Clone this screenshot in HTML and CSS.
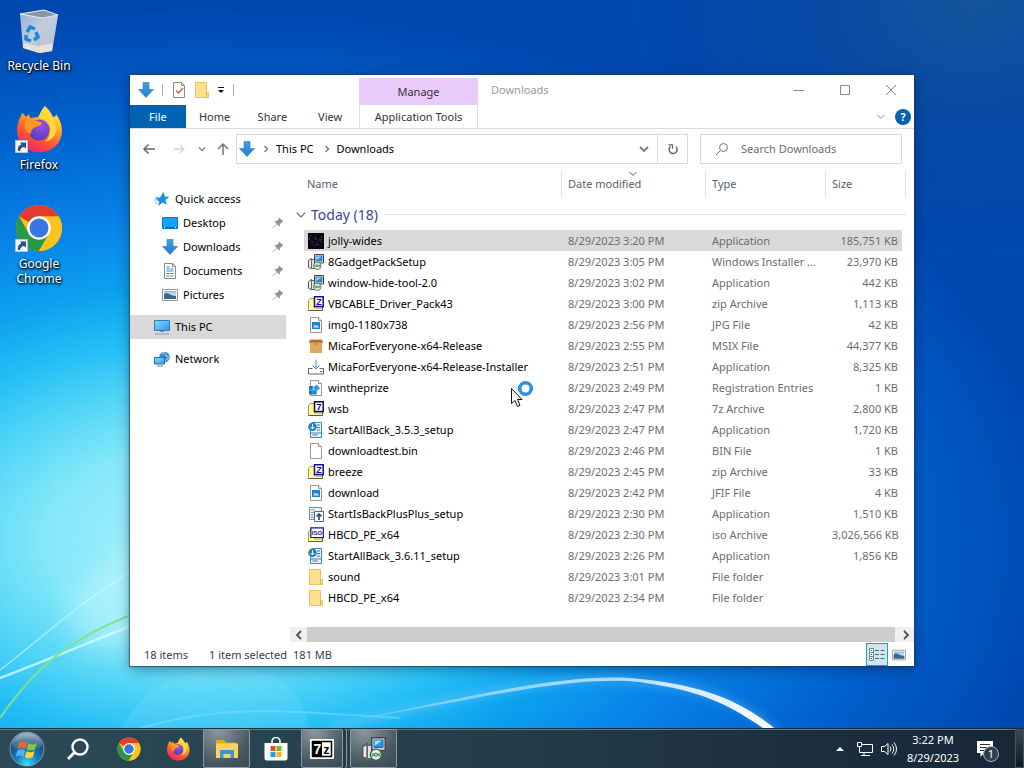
FILE: index.html
```html
<!DOCTYPE html>
<html lang="en">
<head>
<meta charset="utf-8">
<title>Downloads</title>
<link rel="stylesheet" href="styles.css">
</head>
<body>
<svg class="defs" aria-hidden="true">
  <defs>
    <linearGradient id="gArrow" x1="0" x2="0" y1="0" y2="1"><stop offset="0" stop-color="#3f9fe6"/><stop offset="1" stop-color="#1f7fd0"/></linearGradient>
    <linearGradient id="gScreen" x1="0" y1="0" x2="1" y2="1"><stop offset="0" stop-color="#8fd4fb"/><stop offset="1" stop-color="#2a9bea"/></linearGradient>
    <linearGradient id="gPic" x1="0" x2="0" y1="0" y2="1"><stop offset="0" stop-color="#7fbdf0"/><stop offset=".55" stop-color="#d5ebfa"/><stop offset=".6" stop-color="#466f88"/><stop offset="1" stop-color="#2d5a86"/></linearGradient>
    <linearGradient id="gFox" x1=".8" y1="0" x2=".3" y2="1"><stop offset="0" stop-color="#fff24a"/><stop offset=".35" stop-color="#ffb02a"/><stop offset=".65" stop-color="#ff5a30"/><stop offset="1" stop-color="#f01f6a"/></linearGradient>
    <radialGradient id="gFoxGlobe" cx=".6" cy=".3" r=".8"><stop offset="0" stop-color="#9a4ff0"/><stop offset="1" stop-color="#4a3cb0"/></radialGradient>
    <linearGradient id="gBin" x1="0" x2="1" y1="0" y2="1"><stop offset="0" stop-color="#a9bdd3"/><stop offset=".5" stop-color="#d5dde8"/><stop offset="1" stop-color="#9aa9bd"/></linearGradient>
    <radialGradient id="gOrb" cx=".5" cy=".95" r=".95"><stop offset="0" stop-color="#3fe0ff"/><stop offset=".35" stop-color="#1580c0"/><stop offset=".75" stop-color="#1b4a72"/><stop offset="1" stop-color="#5f8aa8"/></radialGradient>
    <linearGradient id="gGloss" x1="0" x2="0" y1="0" y2="1"><stop offset="0" stop-color="#fff" stop-opacity=".75"/><stop offset="1" stop-color="#fff" stop-opacity=".15"/></linearGradient>

    <symbol id="down" viewBox="0 0 16 16"><path d="M5 .5h6v7h4.500L8 15.500.5 7.500H5z" fill="url(#gArrow)" stroke="#2b7cc0" stroke-width=".6"/></symbol>
    <symbol id="folder" viewBox="0 0 16 16"><path d="M1.500.5h11v10h2v5h-13z" fill="#ffe08f" stroke="#e9c362"/><path d="M12.500 10.500v5" stroke="#e0b348"/></symbol>
    <symbol id="star" viewBox="0 0 16 16"><path d="M9.500.8l1.300 4.700 4.500.2-3.700 3 1 5-4.100-2.300L4.300 15l.8-4.600L1.600 7.500l4.500-.9z" fill="#1f8fe0"/><path d="M1 6.500h4M0 9h4M1 12h3" stroke="#74bdf0"/></symbol>
    <symbol id="desktop" viewBox="0 0 16 16"><path d="M.5 2.500h15v11H.5z" fill="#18a0fb" stroke="#0a78c8"/><path d="M1 12.500h14" stroke="#0763a8"/><path d="M2 12.500h1M13 12.500h1" stroke="#fff"/></symbol>
    <symbol id="docs" viewBox="0 0 16 16"><path d="M2.500.5h8l3 3v12h-11z" fill="#fff" stroke="#8a8a8a"/><path d="M10.500.5v3h3" fill="none" stroke="#8a8a8a"/><path d="M4.500 4h3M4.500 6h3M4.500 8h7M4.500 10.500h3M4.500 13h3M8.500 10.500h3M8.500 13h3M8.500 6h3" stroke="#2a8fd0"/></symbol>
    <symbol id="pics" viewBox="0 0 16 16"><path d="M.5 2.500h15v11H.5z" fill="#fff" stroke="#8f9aa3"/><path d="M2 4h12v8H2z" fill="url(#gPic)"/><path d="M2 7l3-1 9 4v2H2z" fill="#3a6a88"/></symbol>
    <symbol id="pc" viewBox="0 0 16 16"><path d="M.5 1.500h15v10H.5z" fill="url(#gScreen)" stroke="#2c7fb8"/><path d="M6 12.500h4" stroke="#78909c"/><path d="M1 15h14" stroke="#8599a5"/></symbol>
    <symbol id="net" viewBox="0 0 16 16"><circle cx="10.500" cy="6" r="5.300" fill="#3c8cc8"/><path d="M8 3c2-2 4-1 4 1s2 2 3 1M11 10c1-2 3-2 4-3" stroke="#a9d8f2" fill="none"/><path d="M.5 6.500h10v6.500H.5z" fill="url(#gScreen)" stroke="#1f70ac"/><path d="M3 15h6" stroke="#4b8dbb"/></symbol>
    <symbol id="pin" viewBox="0 0 12 12"><path d="M7.500.8l3.700 3.700-1.300.7-2 2-.2 2.500L5.200 7.300 1 11.200l-.3-.3L4.700 6.800 2.300 4.300l2.500-.2 2-2z" fill="#8a949c"/></symbol>
    <symbol id="chev" viewBox="0 0 10 10"><path d="M1.500 3L5 6.500 8.500 3" fill="none" stroke="currentColor"/></symbol>
    <symbol id="chevBold" viewBox="0 0 10 10"><path d="M1 3l4 4 4-4" fill="none" stroke="currentColor" stroke-width="1.800"/></symbol>
    <symbol id="chevR" viewBox="0 0 10 10"><path d="M3.500 2L6.500 5l-3 3" fill="none" stroke="currentColor" stroke-width="1.400"/></symbol>

    <symbol id="jolly" viewBox="0 0 16 16"><path d="M0 0h16v16H0z" fill="#0b0710"/><path d="M2 3h2M6 5h2v2M11 6l3 1M3 9h3M8 11l2-1" stroke="#5a3458"/><path d="M9 8h4v2M4 12h8" stroke="#3a1c44"/><path d="M1 6h1M13 4h1" stroke="#c57a5a"/></symbol>
    <symbol id="setup" viewBox="0 0 16 16"><path d="M.5 6.500l3-2v10l-3-1z" fill="#eee" stroke="#555"/><path d="M3.500 5.500h3v9h-3z" fill="#e6dede" stroke="#666"/><path d="M6.500.5h9v8.500h-9z" fill="#d5dade" stroke="#444"/><path d="M8 2h6v5H8z" fill="#1f98ea" stroke="#1f5a9a" stroke-width=".6"/><path d="M8.400 2.400h5L8.400 6z" fill="#9fe0ff"/><circle cx="9.300" cy="11.800" r="3.700" fill="#e3efe6" stroke="#4c5a54" stroke-width=".8"/><path d="M9.300 11.800l-3-1.500v3.200zM9.300 11.800l3-1.500v3.200z" fill="#3fc070"/><circle cx="9.300" cy="11.800" r="1" fill="#fff" stroke="#333" stroke-width=".6"/></symbol>
    <symbol id="arch" viewBox="0 0 16 16"><path d="M.5 4.500l2-2h4v9.500h8v2.500H.5z" fill="#ffff9c" stroke="#a49a4a"/><path d="M.5 14.500h14" stroke="#555"/><path d="M14.500 14V11" stroke="#555"/></symbol>
    <symbol id="zip" viewBox="0 0 16 16"><use href="#arch"/><path d="M6.500.8h8.700v9.700H6.500z" fill="#fff" stroke="#1410a0" stroke-width="1.500"/><text x="10.900" y="9" text-anchor="middle" font-size="9" font-weight="700" font-family="Liberation Sans, sans-serif" fill="#1410a0">Z</text></symbol>
    <symbol id="seven" viewBox="0 0 16 16"><use href="#arch"/><path d="M6.500.8h8.700v9.700H6.500z" fill="#fff" stroke="#0a084a" stroke-width="1.500"/><text x="10.900" y="9" text-anchor="middle" font-size="9" font-weight="700" font-family="Liberation Sans, sans-serif" fill="#0a084a">7</text></symbol>
    <symbol id="iso" viewBox="0 0 16 16"><use href="#arch"/><path d="M2.800.8h12.500v9.700H2.800z" fill="#fff" stroke="#1410a0" stroke-width="1.200"/><text x="9" y="8" text-anchor="middle" font-size="6" font-weight="700" font-family="Liberation Sans, sans-serif" fill="#1410a0">ISO</text></symbol>
    <symbol id="blank" viewBox="0 0 16 16"><path d="M2.500.5h8l3 3v12h-11z" fill="#fff" stroke="#999"/><path d="M10.500.5v3h3" fill="#eee" stroke="#999"/></symbol>
    <symbol id="img" viewBox="0 0 16 16"><use href="#blank"/><path d="M4 5h8v7H4z" fill="#1683d8"/><path d="M5 10.500l2-3 1.500 1.500 1-1 1.500 2.500z" fill="#bfe3fa"/></symbol>
    <symbol id="box" viewBox="0 0 16 16"><path d="M2 3h12v12H2z" fill="#dda860"/><path d="M2 1.500h12L15.500 5H.5z" fill="#c48a48"/><path d="M2.500 2h11v2h-11z" fill="#a87138"/><path d="M6 6h4" stroke="#c08840"/></symbol>
    <symbol id="inst" viewBox="0 0 16 16"><path d="M4.500 9.500h-4v5.500h15V9.500h-4" fill="none" stroke="#5b6570"/><path d="M8 .5v9.500M4.500 6.500L8 10l3.500-3.500" fill="none" stroke="#2a98c0"/><path d="M12 12.500h2" stroke="#5b6570"/></symbol>
    <symbol id="reg" viewBox="0 0 16 16"><use href="#blank"/><path d="M1 6h4v4h3.500v4.500H1z" fill="#1577c0"/><path d="M8.500 4.500L12 8l-3.500 3.500L5 8z" fill="#2f9ae0"/><path d="M1 10h7.500M5 6.500v8" stroke="#7cc8f4" stroke-width=".7"/></symbol>
    <symbol id="sab" viewBox="0 0 16 16"><path d="M4.500.5h9v15h-11V5z" fill="#e4f2fb" stroke="#3d87bd"/><path d="M9 3h3M9 5.500h3M9 8h3M4.500 13h5" stroke="#50708a"/><path d="M3 11h10" stroke="#3d87bd"/><circle cx="4.500" cy="4.800" r="4.300" fill="#1a84c4"/><path d="M4.500 2v5M2.500 5l2 2 2-2" fill="none" stroke="#fff"/></symbol>
    <symbol id="sib" viewBox="0 0 16 16"><path d="M1.500 1.500h12v12h-12z" fill="#eef2f5" stroke="#7a8894"/><path d="M3 4h4M3 6.500h3M3 9h3M3 11.500h3" stroke="#8b98a4"/><path d="M6.500 5.500h9v10h-9z" fill="#fff" stroke="#5c6b7a"/><path d="M11 14V8.500M8.500 10.500L11 8l2.500 2.500" fill="none" stroke="#1f4f94" stroke-width="1.700"/></symbol>

    <symbol id="chrome" viewBox="0 0 48 48"><circle cx="24" cy="24" r="23" fill="#fbc116"/><path d="M24 24L4.100 12.500A23 23 0 0 1 43.900 12.500H24z" fill="#e33b2e"/><path d="M4.100 12.500A23 23 0 0 0 24 47l10-17.300L24 24 14 29.700z" fill="#279847"/><path d="M24 12.500h19.900A23 23 0 0 1 24 47l10-17.300z" fill="#fcc31a"/><circle cx="24" cy="24" r="11.800" fill="#fff"/><circle cx="24" cy="24" r="9.500" fill="#3a76e0"/></symbol>
    <symbol id="firefox" viewBox="0 0 48 48"><path d="M30 1c3 3 6 6 8 11 2 0 3-1 3-3 4 5 6 11 6 17a22 21 0 0 1-45 0C2 20 3 16 5 13l2-5c2 1 3 2 4 4l3-3 1 4c3 0 6-1 8-1z" fill="url(#gFox)"/><circle cx="24" cy="25" r="10.500" fill="url(#gFoxGlobe)"/><path d="M11 14c5-2 9 2 16 3-1 3-3 4-6 5-3 1-5 3-5 7-6-2-8-9-5-15z" fill="#ff9526"/><path d="M30 1c-4 4-6 9-6 12 5 0 10 3 11 9 1 6-1 11-5 15 8-2 13-9 11-17-1-7-9-12-11-19z" fill="#ffd93a"/></symbol>
    <symbol id="shortcut" viewBox="0 0 13 13"><path d="M.5.5h12v12H.5z" fill="#f4f6f8" stroke="#b9c4cf"/><path d="M3 11c-.5-4 1-6 3.500-6.500L5 2.500h6v6L9 7C6 7.500 5.500 9 5 11z" fill="#25528f"/></symbol>
    <symbol id="flag" viewBox="0 0 24 24"><path d="M4 5.500c3-1.800 5-1.500 7.500 0L10 11.500C7.500 10 5.500 10 2.500 11.500z" fill="#f0642a"/><path d="M12.800 6c3 1.500 5 1.500 8 0l-1.700 6c-3 1.500-5 1.300-7.800-.1z" fill="#8cc63c"/><path d="M2.200 13c3-1.600 5-1.500 7.500 0L8.100 19c-2.500-1.500-4.500-1.500-7.500 0z" fill="#4fb4f0"/><path d="M11 13.400c2.800 1.500 4.800 1.500 7.800 0l-1.700 6c-3 1.500-5 1.500-7.700-.1z" fill="#ffd23f"/></symbol>
  </defs>
</svg>

<div class="screen">
  <svg class="wallpaper" viewBox="0 0 1024 768" preserveAspectRatio="xMidYMid slice" aria-hidden="true">
    <defs>
      <radialGradient id="sky" gradientUnits="userSpaceOnUse" cx="0" cy="0" r="1" gradientTransform="translate(200 540) scale(860 530)">
        <stop offset="0" stop-color="#a8f0fc"/><stop offset=".18" stop-color="#84e8f9"/><stop offset=".29" stop-color="#4fd4f7"/><stop offset=".38" stop-color="#24bef6"/><stop offset=".48" stop-color="#0ca0ee"/><stop offset=".6" stop-color="#0884ea"/><stop offset=".8" stop-color="#0060cc"/><stop offset="1" stop-color="#0048b0"/>
      </radialGradient>
      <radialGradient id="corner" cx=".95" cy="0" r=".35"><stop offset="0" stop-color="#1c5a94" stop-opacity=".7"/><stop offset="1" stop-color="#0a3f90" stop-opacity="0"/></radialGradient>
      <linearGradient id="arcFade" x1="0" x2="1"><stop offset="0" stop-color="#fff" stop-opacity=".1"/><stop offset=".5" stop-color="#cfefff" stop-opacity=".7"/><stop offset="1" stop-color="#fff"/></linearGradient>
      <filter id="soft" x="-20%" y="-20%" width="140%" height="140%"><feGaussianBlur stdDeviation="4"/></filter>
      <filter id="haze" x="-50%" y="-50%" width="200%" height="200%"><feGaussianBlur stdDeviation="14"/></filter>
    </defs>
    <rect width="1024" height="768" fill="url(#sky)"/>
    <rect width="1024" height="768" fill="url(#corner)"/>
    <path d="M70 600c20-30 50-50 80-60v110H80z" fill="#d8fbff" opacity=".4" filter="url(#haze)"/>
    <path d="M120 735c20-60 90-78 150-60 30 12 40 40 40 70z" fill="#9fe6ff" opacity=".15"/>
    <path d="M0 678C60 655 95 640 150 618" fill="none" stroke="#d5fbff" stroke-width="2.500" opacity=".8"/>
    <path d="M0 670C40 640 80 600 150 560" fill="none" stroke="#c8f8ff" stroke-width="1.500" opacity=".7"/>
    <path d="M0 718C40 660 80 632 150 608" fill="none" stroke="#7fe38a" stroke-width="2"/>
    <path d="M120 735C220 700 290 712 400 718" fill="none" stroke="#8fe6ff" stroke-width="2" opacity=".4"/>
    <path d="M330 728C440 700 560 672 640 681c60 6 100 20 136 50" fill="none" stroke="#9fdcff" stroke-width="9" opacity=".25" filter="url(#soft)"/>
    <path d="M330 724C440 705 560 670 640 679c60 6 100 20 138 52l-11 0C720 697 690 690 640 682c-80-8-200 27-310 41z" fill="url(#arcFade)"/>
  </svg>

  <main class="desktop">
    <nav class="shortcuts" aria-label="Desktop">
      <button class="shortcut">
        <svg class="big" viewBox="0 0 48 48" aria-hidden="true"><path d="M5 8L29 4l14 5-6 36-13 2-16-5z" fill="url(#gBin)" opacity=".9"/><path d="M5 8l22 4 16-3-14-5z" fill="#8896a8" stroke="#e6eef6"/><path d="M27 12l-2 35 12-2 6-36z" fill="#c4ccd8" opacity=".7"/><path d="M8 37l16 3 14-3-1 8-13 2-16-5z" fill="#f5ead8" opacity=".75"/><path d="M12 26l3-5 5 2M21 26l2 5-4 3M16 35l-5-2v-4" fill="none" stroke="#2086d8" stroke-width="3.500"/></svg>
        <span>Recycle Bin</span>
      </button>
      <button class="shortcut">
        <span class="art"><svg class="big" aria-hidden="true"><use href="#firefox"/></svg><svg class="badge" aria-hidden="true"><use href="#shortcut"/></svg></span>
        <span>Firefox</span>
      </button>
      <button class="shortcut">
        <span class="art"><svg class="big" aria-hidden="true"><use href="#chrome"/></svg><svg class="badge" aria-hidden="true"><use href="#shortcut"/></svg></span>
        <span>Google<br>Chrome</span>
      </button>
    </nav>

    <section class="window" aria-label="Downloads">
      <header class="ribbon">
        <div class="quick">
          <svg class="i16" aria-hidden="true"><use href="#down"/></svg>
          <i class="bar"></i>
          <button aria-label="Properties"><svg class="i16" viewBox="0 0 16 16"><path d="M2.500.5h8l3 3v12h-11z" fill="#fff" stroke="#8a8a8a"/><path d="M10.500.5v3h3" fill="none" stroke="#8a8a8a"/><path d="M5 8.500l2.500 2.500L12 6" fill="none" stroke="#d8604a" stroke-width="1.500"/></svg></button>
          <button aria-label="New folder"><svg class="i16"><use href="#folder"/></svg></button>
          <button aria-label="Customize"><svg class="i8" viewBox="0 0 8 8"><path d="M1 1.500h6" stroke="#111"/><path d="M1 4h6L4 7z" fill="#111"/></svg></button>
          <i class="bar"></i>
        </div>
        <div class="manage">Manage</div>
        <div class="caption">
          <h1>Downloads</h1>
          <button aria-label="Minimize"><svg class="i12" viewBox="0 0 12 12"><path d="M.5 6.500h11" stroke="#888"/></svg></button>
          <button aria-label="Maximize"><svg class="i12" viewBox="0 0 12 12"><path d="M1.500 1.500h9v9h-9z" fill="none" stroke="#888"/></svg></button>
          <button aria-label="Close"><svg class="i12" viewBox="0 0 12 12"><path d="M1 1l10 10M11 1L1 11" stroke="#888"/></svg></button>
        </div>
        <div class="tabs">
          <button class="file">File</button><button>Home</button><button>Share</button><button>View</button>
        </div>
        <button class="tools">Application Tools</button>
        <div class="help">
          <button aria-label="Expand the ribbon"><svg class="i10"><use href="#chev"/></svg></button>
          <button class="question" aria-label="Help">?</button>
        </div>
      </header>

      <div class="location">
        <div class="arrows">
          <button aria-label="Back"><svg class="i14" viewBox="0 0 14 14"><path d="M13 7H2M6.500 2.500L2 7l4.500 4.500" fill="none" stroke="#666" stroke-width="1.500"/></svg></button>
          <button aria-label="Forward"><svg class="i14" viewBox="0 0 14 14"><path d="M2 7h10M8 3l4 4-4 4" fill="none" stroke="#d4d4d4" stroke-width="1.300"/></svg></button>
          <button aria-label="Recent locations"><svg class="i8"><use href="#chevBold"/></svg></button>
          <button aria-label="Up"><svg class="i14" viewBox="0 0 14 14"><path d="M7 13V2M2 7l5-5 5 5" fill="none" stroke="#777" stroke-width="1.500"/></svg></button>
        </div>
        <div class="address">
          <svg class="i16" aria-hidden="true"><use href="#down"/></svg>
          <svg class="i10" aria-hidden="true"><use href="#chevR"/></svg>
          <a href="#">This PC</a>
          <svg class="i10" aria-hidden="true"><use href="#chevR"/></svg>
          <a href="#">Downloads</a>
          <button class="drop" aria-label="Previous locations"><svg class="i10"><use href="#chevBold"/></svg></button>
          <button class="reload" aria-label="Refresh"><svg class="i12" viewBox="0 0 12 12"><path d="M3.500 3.500A4 4 0 1 0 9 3.800" fill="none" stroke="#666" stroke-width="1.500"/><path d="M1.500 1.800h4v4" fill="none" stroke="#666" stroke-width="1.300"/></svg></button>
        </div>
        <label class="search">
          <svg class="i14" viewBox="0 0 14 14" aria-hidden="true"><circle cx="8.500" cy="5.500" r="4" fill="none" stroke="#777"/><path d="M5.500 8.500L1 13" stroke="#777"/></svg>
          <input type="text" placeholder="Search Downloads" aria-label="Search Downloads">
        </label>
      </div>

      <div class="panes">
        <nav class="tree" aria-label="Folders">
          <a class="root" href="#"><svg class="i16"><use href="#star"/></svg>Quick access</a>
          <a href="#"><svg class="i16"><use href="#desktop"/></svg>Desktop<svg class="pin"><use href="#pin"/></svg></a>
          <a href="#"><svg class="i16"><use href="#down"/></svg>Downloads<svg class="pin"><use href="#pin"/></svg></a>
          <a href="#"><svg class="i16"><use href="#docs"/></svg>Documents<svg class="pin"><use href="#pin"/></svg></a>
          <a href="#"><svg class="i16"><use href="#pics"/></svg>Pictures<svg class="pin"><use href="#pin"/></svg></a>
          <a class="root top current" href="#"><svg class="i16"><use href="#pc"/></svg>This PC</a>
          <a class="root top" href="#"><svg class="i16"><use href="#net"/></svg>Network</a>
        </nav>

        <div class="details">
          <div class="list">
            <table>
              <colgroup><col class="c-edge"><col><col class="c-date"><col class="c-type"><col class="c-size"><col class="c-end"></colgroup>
              <thead>
                <tr><td></td><th class="name"><span>Name</span></th><th><span>Date modified</span><svg class="sort"><use href="#chev"/></svg></th><th><span>Type</span></th><th><span>Size</span></th><td></td></tr>
              </thead>
              <tbody>
                <tr class="group"><td colspan="6"><button><svg class="i12"><use href="#chev"/></svg>Today (18)</button></td></tr>
                <tr class="picked"><td></td><td><svg class="i16"><use href="#jolly"/></svg>jolly-wides</td><td>8/29/2023 3:20 PM</td><td>Application</td><td>185,751 KB</td><td></td></tr>
                <tr><td></td><td><svg class="i16"><use href="#setup"/></svg>8GadgetPackSetup</td><td>8/29/2023 3:05 PM</td><td>Windows Installer ...</td><td>23,970 KB</td><td></td></tr>
                <tr><td></td><td><svg class="i16"><use href="#setup"/></svg>window-hide-tool-2.0</td><td>8/29/2023 3:02 PM</td><td>Application</td><td>442 KB</td><td></td></tr>
                <tr><td></td><td><svg class="i16"><use href="#zip"/></svg>VBCABLE_Driver_Pack43</td><td>8/29/2023 3:00 PM</td><td>zip Archive</td><td>1,113 KB</td><td></td></tr>
                <tr><td></td><td><svg class="i16"><use href="#img"/></svg>img0-1180x738</td><td>8/29/2023 2:56 PM</td><td>JPG File</td><td>42 KB</td><td></td></tr>
                <tr><td></td><td><svg class="i16"><use href="#box"/></svg>MicaForEveryone-x64-Release</td><td>8/29/2023 2:55 PM</td><td>MSIX File</td><td>44,377 KB</td><td></td></tr>
                <tr><td></td><td><svg class="i16"><use href="#inst"/></svg>MicaForEveryone-x64-Release-Installer</td><td>8/29/2023 2:51 PM</td><td>Application</td><td>8,325 KB</td><td></td></tr>
                <tr><td></td><td><svg class="i16"><use href="#reg"/></svg>wintheprize</td><td>8/29/2023 2:49 PM</td><td>Registration Entries</td><td>1 KB</td><td></td></tr>
                <tr><td></td><td><svg class="i16"><use href="#seven"/></svg>wsb</td><td>8/29/2023 2:47 PM</td><td>7z Archive</td><td>2,800 KB</td><td></td></tr>
                <tr><td></td><td><svg class="i16"><use href="#sab"/></svg>StartAllBack_3.5.3_setup</td><td>8/29/2023 2:47 PM</td><td>Application</td><td>1,720 KB</td><td></td></tr>
                <tr><td></td><td><svg class="i16"><use href="#blank"/></svg>downloadtest.bin</td><td>8/29/2023 2:46 PM</td><td>BIN File</td><td>1 KB</td><td></td></tr>
                <tr><td></td><td><svg class="i16"><use href="#zip"/></svg>breeze</td><td>8/29/2023 2:45 PM</td><td>zip Archive</td><td>33 KB</td><td></td></tr>
                <tr><td></td><td><svg class="i16"><use href="#img"/></svg>download</td><td>8/29/2023 2:42 PM</td><td>JFIF File</td><td>4 KB</td><td></td></tr>
                <tr><td></td><td><svg class="i16"><use href="#sib"/></svg>StartIsBackPlusPlus_setup</td><td>8/29/2023 2:30 PM</td><td>Application</td><td>1,510 KB</td><td></td></tr>
                <tr><td></td><td><svg class="i16"><use href="#iso"/></svg>HBCD_PE_x64</td><td>8/29/2023 2:30 PM</td><td>iso Archive</td><td>3,026,566 KB</td><td></td></tr>
                <tr><td></td><td><svg class="i16"><use href="#sab"/></svg>StartAllBack_3.6.11_setup</td><td>8/29/2023 2:26 PM</td><td>Application</td><td>1,856 KB</td><td></td></tr>
                <tr><td></td><td><svg class="i16"><use href="#folder"/></svg>sound</td><td>8/29/2023 3:01 PM</td><td>File folder</td><td></td><td></td></tr>
                <tr><td></td><td><svg class="i16"><use href="#folder"/></svg>HBCD_PE_x64</td><td>8/29/2023 2:34 PM</td><td>File folder</td><td></td><td></td></tr>
              </tbody>
            </table>
          </div>
          <div class="scroll">
            <button aria-label="Scroll left"><svg class="i10 left"><use href="#chevBold"/></svg></button>
            <div class="thumb"></div>
            <button aria-label="Scroll right"><svg class="i10 right"><use href="#chevBold"/></svg></button>
          </div>
        </div>
      </div>

      <footer class="status">
        <span class="count">18 items</span><span>1 item selected</span><span>181 MB</span>
        <div class="views">
          <button class="on" aria-label="Details view"><svg class="i18" viewBox="0 0 18 18"><path d="M1.500 2.500h4v4h-4zM1.500 6.500h4v4h-4zM1.500 10.500h4v4h-4z" fill="#fff" stroke="#6d8b95"/><path d="M3 4.500h1M3 8.500h1M3 12.500h1" stroke="#333"/><path d="M7 4.500h4M7 8.500h4M7 12.500h4M12.500 4.500h4M12.500 8.500h4M12.500 12.500h4" stroke="#55666e"/></svg></button>
          <button aria-label="Thumbnail view"><svg class="i14" viewBox="0 1 16 14"><use href="#pics" width="16" height="16"/></svg></button>
        </div>
      </footer>
    </section>

    <svg class="pointer" viewBox="0 0 24 28" aria-hidden="true"><circle cx="15.500" cy="8.500" r="5.800" fill="#fff" stroke="#2f8fe0" stroke-width="3.600"/><path d="M1.500 8.500v15l3.500-3 2.500 6 2.500-1-2.500-6h4.500z" fill="#fff" stroke="#111"/></svg>
  </main>

  <footer class="taskbar">
    <button class="start" aria-label="Start"><svg class="orb" viewBox="0 0 36 36"><circle cx="18" cy="18" r="17" fill="url(#gOrb)" stroke="#8fb0c4" stroke-width=".8"/><path d="M2.500 15C4 6 11 2 18 2s14 4 15.500 13C25 20 11 20 2.500 15z" fill="url(#gGloss)" opacity=".6"/><use href="#flag" x="6" y="6" width="25" height="25"/></svg></button>
    <button class="task" aria-label="Search"><svg class="i24" viewBox="0 0 24 24"><circle cx="14" cy="10" r="7.500" fill="none" stroke="#fff" stroke-width="2.400"/><path d="M8.500 15.500L2 22" stroke="#fff" stroke-width="2.800"/></svg></button>
    <button class="task" aria-label="Google Chrome"><svg class="i24"><use href="#chrome"/></svg></button>
    <button class="task" aria-label="Firefox"><svg class="i24"><use href="#firefox"/></svg></button>
    <button class="task open" aria-label="File Explorer"><svg class="i24" viewBox="0 0 24 24"><path d="M1 3h8l2 2.500h10v3H1z" fill="#e8a820"/><path d="M1 6.500h22V21H1z" fill="#ffd35c"/><path d="M5 13h14v8h-3.500v-4h-7v4H5z" fill="#3a96dc"/></svg></button>
    <button class="task store" aria-label="Microsoft Store"><svg class="i24" viewBox="0 0 24 24"><path d="M8 6V4.500a4 4 0 0 1 8 0V6" fill="none" stroke="#e8eef2" stroke-width="1.700"/><path d="M.5 6h23v15.500a2 2 0 0 1-2 2h-19a2 2 0 0 1-2-2z" fill="#fff"/><path d="M6.500 9h5v5h-5z" fill="#e8502a"/><path d="M12.500 9h5v5h-5z" fill="#7cb82a"/><path d="M6.500 15h5v5h-5z" fill="#1f9fe8"/><path d="M12.500 15h5v5h-5z" fill="#f8b814"/></svg></button>
    <button class="task open stack" aria-label="7-Zip"><svg class="i24" viewBox="0 0 24 24"><path d="M.5 2.500h23v19H.5z" fill="#fff" stroke="#fff"/><path d="M2.500 4.500h19v15h-19z" fill="#fff" stroke="#000" stroke-width="1.500"/><path d="M3 5h9v14H3z" fill="#000"/><text x="7.500" y="17" text-anchor="middle" font-family="Liberation Sans, sans-serif" font-size="14" font-weight="700" fill="#fff">7</text><text x="16.500" y="17" text-anchor="middle" font-family="Liberation Sans, sans-serif" font-size="12" font-weight="700">z</text></svg></button>
    <button class="task open" aria-label="Setup"><svg class="i24"><use href="#setup"/></svg></button>
    <div class="tray">
      <button aria-label="Show hidden icons"><svg class="i8" viewBox="0 0 8 8"><path d="M0 6l4-4 4 4z" fill="#fff"/></svg></button>
      <button aria-label="Network"><svg class="i18" viewBox="0 0 18 18"><path d="M6 4.500h10.500v8H3.500V7.500M8 12.500v3M5 15.500h9" fill="none" stroke="#fff"/><path d="M1.500 2.500h4v4h-4zM3.500 6.500v3" fill="none" stroke="#fff"/></svg></button>
      <button aria-label="Volume"><svg class="i18" viewBox="0 0 18 18"><path d="M1.500 6.500h3l3.500-3v11l-3.500-3h-3z" fill="none" stroke="#fff"/><path d="M10 6.500q2 2.500 0 5M12 4.500q3.500 4.500 0 9M14 2.500q5 6.500 0 13" fill="none" stroke="#fff"/></svg></button>
      <button class="clock"><span>3:22 PM</span><span>8/29/2023</span></button>
      <button class="notes" aria-label="1 new notification"><svg class="i18" viewBox="0 0 18 18"><path d="M1 1h16v12H8l-3.500 4v-4H1z" fill="#fff"/><path d="M4 4.500h10M4 7.500h10M4 10.500h6" stroke="#24323c"/></svg><span>1</span></button>
      <button class="peek" aria-label="Show desktop"></button>
    </div>
  </footer>
</div>
</body>
</html>
```
FILE: styles.css
```css
* { box-sizing: border-box; }

body {
  margin: 0;
  font: 11px/16px "Noto Sans", "Open Sans", sans-serif;
  color: #000;
}

button {
  display: flex;
  align-items: center;
  justify-content: center;
  padding: 0;
  border: 0;
  background: none;
  font: inherit;
  color: inherit;
}

a { color: inherit; text-decoration: none; }

.defs { position: absolute; width: 0; height: 0; }

svg { flex: none; display: block; }
.i8 { width: 8px; height: 8px; }
.i10 { width: 10px; height: 10px; }
.i12 { width: 12px; height: 12px; }
.i14 { width: 14px; height: 14px; }
.i16 { width: 16px; height: 16px; }
.i18 { width: 18px; height: 18px; }
.i24 { width: 24px; height: 24px; }

.screen {
  position: relative;
  display: flex;
  flex-direction: column;
  height: 100vh;
  overflow: hidden;
}

.wallpaper { position: absolute; inset: 0; width: 100%; height: 100%; }

.desktop { position: relative; flex: 1; min-height: 0; }

/* Desktop shortcuts */
.shortcuts {
  display: flex;
  flex-direction: column;
  gap: 25px;
  width: 78px;
  padding-top: 6px;
}

.shortcut {
  flex-direction: column;
  gap: 4px;
  min-height: 74px;
  justify-content: flex-start;
  font-size: 12px;
  line-height: 15px;
  color: #fff;
  text-shadow: 1px 1px 2px #000, 0 1px 3px #000;
}

.big { width: 48px; height: 48px; }
.art { position: relative; }
.badge { position: absolute; left: 0; bottom: 0; width: 13px; height: 13px; }

/* Explorer window */
.window {
  position: absolute;
  inset: 75px 110px 62px 130px;
  display: flex;
  flex-direction: column;
  background: #fff;
  box-shadow: 0 0 1px 1px rgba(30, 60, 90, .6), 0 3px 12px rgba(0, 20, 60, .45);
}

.ribbon {
  display: grid;
  grid-template: 30px 23px / 229px 119px 1fr;
  border-bottom: 1px solid #dadbdc;
  color: #333;
}

.quick { display: flex; align-items: center; gap: 7px; padding-left: 8px; }
.bar { width: 1px; height: 12px; margin: 0 1px; background: #aaa; }

.manage {
  margin-top: 3px;
  display: grid;
  place-items: center;
  background: #e9ccfb;
}

.caption { display: flex; align-items: center; }
.caption h1 { flex: 1; margin: 0; padding-left: 13px; font-size: 11px; font-weight: 400; color: #999; }
.caption button { width: 46px; height: 28px; }

.tabs { display: flex; }
.tabs button { width: 58px; }
.tabs .file { width: 56px; background: #0063b1; color: #fff; }

.tools { border: solid #e0e0e0; border-width: 0 1px; }

.help { display: flex; align-items: center; justify-content: flex-end; gap: 9px; padding-right: 3px; color: #888; }
.question { width: 16px; height: 16px; border-radius: 50%; background: #0063b1; color: #fff; font-weight: 700; }

.location { display: flex; align-items: center; height: 40px; padding-right: 12px; }

.arrows { display: flex; align-items: center; gap: 14px; width: 106px; padding-left: 12px; color: #888; }
.arrows button { width: 14px; }
.arrows button:nth-child(2) { margin-left: 2px; }
.arrows button:nth-child(3) { width: 8px; margin-left: -2px; }
.arrows button:nth-child(4) { margin-left: -4px; }

.address {
  display: flex;
  align-items: center;
  flex: 1;
  gap: 6px;
  height: 30px;
  margin-right: 12px;
  padding-left: 2px;
  border: 1px solid #d9d9d9;
  color: #777;
}
.address > .i10 { margin-right: -1px; }
.address a { margin-right: 2px; color: #000; }
.drop { margin-left: auto; width: 14px; }
.reload { align-self: stretch; width: 30px; border-left: 1px solid #d9d9d9; }

.search {
  display: flex;
  align-items: center;
  gap: 12px;
  width: 202px;
  height: 30px;
  padding-left: 14px;
  border: 1px solid #d9d9d9;
}
.search input { flex: 1; min-width: 0; padding: 0; border: 0; outline: 0; font: inherit; }
.search input::placeholder { color: #6d6d6d; opacity: 1; }

.panes { display: flex; flex: 1; min-height: 0; }

/* Navigation tree */
.tree { width: 160px; padding: 18px 4px 0 0; }
.tree a { display: flex; align-items: center; gap: 5px; height: 24px; padding: 0 2px 0 32px; }
.tree .root { padding-left: 24px; }
.tree .top { margin-top: 8px; }
.tree .current { background: #d9d9d9; }
.pin { width: 12px; height: 12px; margin-left: auto; }

/* File list */
.details { display: flex; flex-direction: column; flex: 1; min-width: 0; }
.list { flex: 1; min-height: 0; padding: 0 8px 0 4px; overflow: hidden; }

table { width: 100%; table-layout: fixed; border-spacing: 0; }
.c-edge { width: 10px; }
.c-date { width: 144px; }
.c-type { width: 120px; }
.c-size { width: 76px; }
.c-end { width: 4px; }

th, td { height: 21px; padding: 0 0 0 6px; text-align: left; font-weight: 400; white-space: nowrap; color: #6d6d6d; }
td:first-child, td:last-child { padding: 0; }
thead th, thead td { position: relative; height: 30px; color: #555f70; }
thead th span { display: block; padding: 5px 0 5px 6px; margin-left: -7px; border-left: 1px solid #e2e2e2; }
thead .name { padding-left: 3px; }
thead .name span { margin: 0; padding-left: 0; border: 0; }
thead td:last-child { background: linear-gradient(#e2e2e2, #e2e2e2) right / 1px 26px no-repeat; }
.sort { position: absolute; left: 66px; top: 0; width: 10px; height: 10px; }

.group td { height: 31px; }
.group button { width: 100%; gap: 4px; font-size: 14px; color: #3a4696; }
.group button::after { content: ""; flex: 1; height: 1px; margin-left: 2px; background: #e5e5e5; }
.group svg { color: #666; margin-left: 1px; }

tbody td:nth-child(2) { padding-left: 4px; color: #000; }
tbody td .i16 { display: inline-block; vertical-align: -4px; margin-right: 4px; }
tbody td:nth-child(5) { padding-right: 4px; text-align: right; }
.picked td:nth-child(n+2):nth-child(-n+5) { background: #d9d9d9; }

.scroll { display: flex; height: 15px; margin-bottom: 1px; background: #f0f0f0; }
.scroll button { width: 17px; color: #505050; }
.thumb { flex: 1; margin-right: 2px; background: #cdcdcd; }
.left { transform: rotate(90deg); }
.right { transform: rotate(-90deg); }

.status { display: flex; align-items: center; height: 23px; padding: 0 4px 0 14px; gap: 6px; color: #333f50; }
.count { margin-right: 15px; }
.views { display: flex; margin-left: auto; }
.views button { width: 22px; height: 23px; }
.views .on { border: 1px solid #26a0ba; background: #cbe8f0; }

.pointer { position: absolute; left: 510px; top: 380px; width: 24px; height: 28px; }

/* Taskbar */
.taskbar {
  position: relative;
  display: flex;
  align-items: stretch;
  height: 40px;
  border-top: 1px solid #12303f;
  background: linear-gradient(90deg, #2b4956, #263e4b 45%, #1d3040 75%, #182636);
  box-shadow: inset 0 1px #5d7c8a;
  color: #fff;
}
.start { width: 54px; }
.orb { width: 36px; height: 36px; }
.task { width: 48px; margin-right: 1px; }
.task:nth-child(3) { margin-left: 2px; }
.open {
  width: 47px;
  border: 1px solid #8b9ba3;
  border-radius: 2px;
  background: radial-gradient(circle at 30% 0, #8b999f, #46565f 70%, #3c4b54);
}
.store { margin-left: 1px; }
.stack { width: 42px; margin-right: 7px; box-shadow: 3px 0 #2a3a43, 4px 0 #8b9ba3; }

.tray { display: flex; align-items: stretch; margin-left: auto; }
.tray > button { width: 24px; }
.tray > button:first-child { width: 27px; }
.tray .clock { flex-direction: column; width: 64px; line-height: 18px; }
.tray .notes { position: relative; width: 50px; justify-content: flex-start; padding-left: 11px; }
.notes span {
  position: absolute;
  left: 18px;
  top: 17px;
  width: 16px;
  height: 16px;
  border: 1px solid #a9b3ba;
  border-radius: 50%;
  background: #333e48;
  line-height: 14px;
}
.tray .peek { width: 9px; border: 1px solid #44525e; background: linear-gradient(#3c4752, #0f1822); }
```
